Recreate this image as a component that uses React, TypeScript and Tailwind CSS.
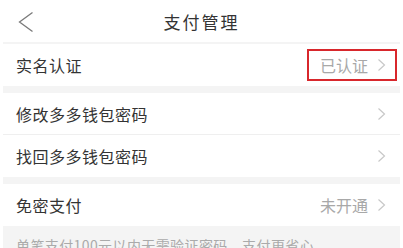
import React from "react";

const font = { fontFamily: '"Noto Sans CJK SC", "Noto Sans", sans-serif' };

function Chevron() {
  return (
    <svg width="9" height="14" viewBox="0 0 9 14" className="ml-[9px]">
      <polyline points="1.5,1.5 7.5,7 1.5,12.5" fill="none" stroke="#c8c8c8" strokeWidth="1.2" />
    </svg>
  );
}

function Row({ label, value, boxed, border }: { label: string; value?: string; boxed?: boolean; border?: boolean }) {
  return (
    <div className={`flex items-center justify-between h-[42px] bg-white pl-[13px] pr-[14px] ${border ? "border-b border-[#efefef]" : ""}`}>
      <span className="text-[16px] tracking-[0.5px] text-[#333]">{label}</span>
      <div
        className={`flex items-center h-[32px] ${boxed ? "border-2 border-[#d8272c] pl-[11px] pr-[9px] -mr-[11px]" : ""}`}
      >
        {value && <span className="text-[16px] text-[#a8a8a8]">{value}</span>}
        <Chevron />
      </div>
    </div>
  );
}

export default function App() {
  return (
    <div className="w-[403px] h-[248px] overflow-hidden bg-white" style={font}>
      <div className="w-[397px] ml-[3px] bg-[#f4f4f4] h-[248px]">
        <div className="relative flex items-center justify-center h-[42px] bg-white">
          <svg width="16" height="22" viewBox="0 0 16 22" className="absolute left-[15px] top-[11px]">
            <polyline points="14.5,1.5 1.5,11 14.5,20.5" fill="none" stroke="#7a7a7a" strokeWidth="1.3" />
          </svg>
          <span className="text-[17px] tracking-[2px] text-[#333] pt-[1px]">支付管理</span>
        </div>
        <div className="h-[2px]" />
        <Row label="实名认证" value="已认证" boxed />
        <div className="h-[7px]" />
        <Row label="修改多多钱包密码" border />
        <Row label="找回多多钱包密码" />
        <div className="h-[7px]" />
        <Row label="免密支付" value="未开通" />
        <div className="pl-[13px] pt-[9px] text-[14px] tracking-[0.4px] text-[#aaaaaa] whitespace-nowrap">
          单笔支付100元以内无需验证密码，支付更省心
        </div>
      </div>
    </div>
  );
}
